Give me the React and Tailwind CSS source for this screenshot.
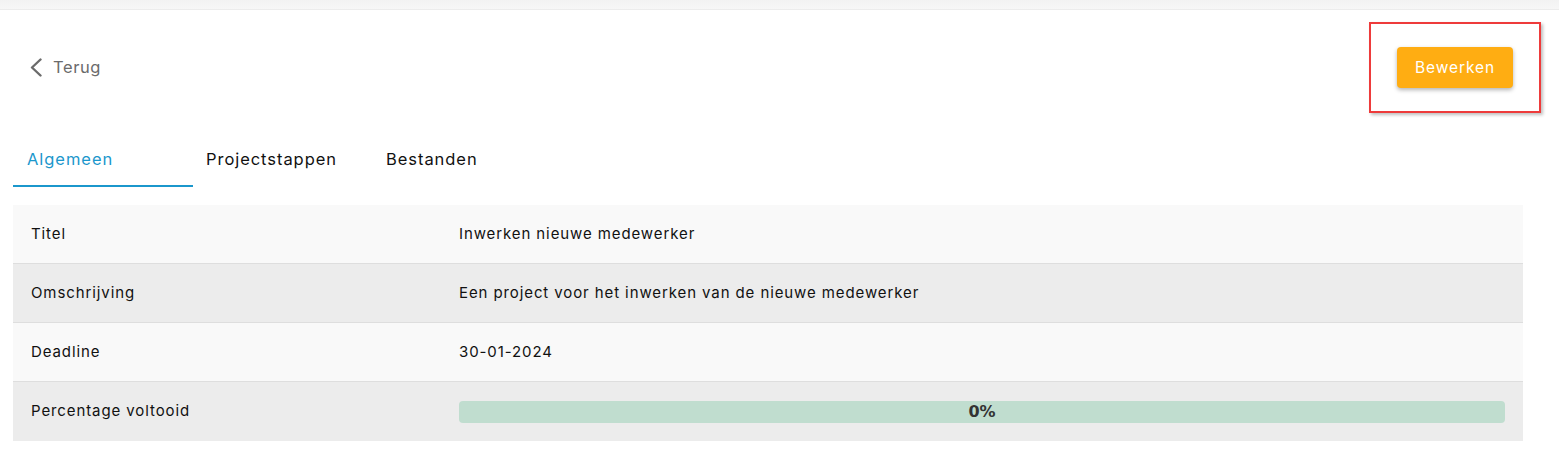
const rows = [
  { label: "Titel", value: "Inwerken nieuwe medewerker" },
  { label: "Omschrijving", value: "Een project voor het inwerken van de nieuwe medewerker" },
  { label: "Deadline", value: "30-01-2024" },
  { label: "Percentage voltooid", progress: 0 },
];

const tabs = ["Algemeen", "Projectstappen", "Bestanden"];

export default function App() {
  return (
    <div className="min-h-[472px] bg-white font-['Inter','Noto_Sans',sans-serif] text-[#111]">
      {/* schaduw van de header */}
      <div className="h-[10px] bg-gradient-to-b from-[#f2f2f2] to-[#f7f7f7] border-b border-[#ececec]" />

      <div className="flex items-start justify-between pl-[30px] pr-[18px] pt-[12px]">
        <button className="mt-[33px] flex items-center gap-[11px] text-[16.5px] text-[#6b6b6b]">
          <svg width="12" height="19" viewBox="0 0 12 19" fill="none">
            <polyline points="10.5,1.5 2,9.5 10.5,17.5" stroke="#6b6b6b" strokeWidth="2.4" strokeLinecap="round" strokeLinejoin="round" />
          </svg>
          <span className="tracking-[0.6px]">Terug</span>
        </button>
        <div className="flex h-[91px] w-[172px] items-center justify-center border-2 border-[#ee3b3b] shadow-[2px_2px_3px_rgba(0,0,0,0.25)]">
          <button className="h-[41px] w-[116px] rounded-[4px] bg-[#ffad12] text-[15.5px] tracking-[0.9px] text-white shadow-[0_2px_4px_rgba(0,0,0,0.3)]">
            Bewerken
          </button>
        </div>
      </div>

      <div className="mt-[26px] flex px-[13px]">
        {tabs.map((tab, i) => (
          <div
            key={tab}
            className={
              i === 0
                ? "h-[48px] w-[180px] border-b-2 border-[#1b97cc] pl-[14px] pt-[8px] text-[16.5px] tracking-[0.95px] text-[#1b97cc]"
                : "h-[48px] w-[180px] pl-[13px] pt-[8px] text-[16.5px] tracking-[0.95px] text-[#111]"
            }
          >
            {tab}
          </div>
        ))}
      </div>

      <div className="mx-[13px] mt-[18px] w-[1510px]">
        {rows.map((row, i) => (
          <div
            key={row.label}
            className={
              (i % 2 === 0 ? "bg-[#f9f9f9]" : "bg-[#ececec]") +
              " flex h-[59px] items-center text-[15px] tracking-[0.9px] " +
              (i < rows.length - 1 ? "border-b border-[#dedede]" : "")
            }
          >
            <div className="w-[446px] pl-[18px]">{row.label}</div>
            {row.progress === undefined ? (
              <div>{row.value}</div>
            ) : (
              <div className="flex h-[22px] w-[1046px] items-center justify-center rounded-[4px] bg-[#c0ddcf] font-['DejaVu_Sans',sans-serif] text-[16px] font-bold tracking-normal text-[#333]">
                {row.progress}%
              </div>
            )}
          </div>
        ))}
      </div>
    </div>
  );
}
